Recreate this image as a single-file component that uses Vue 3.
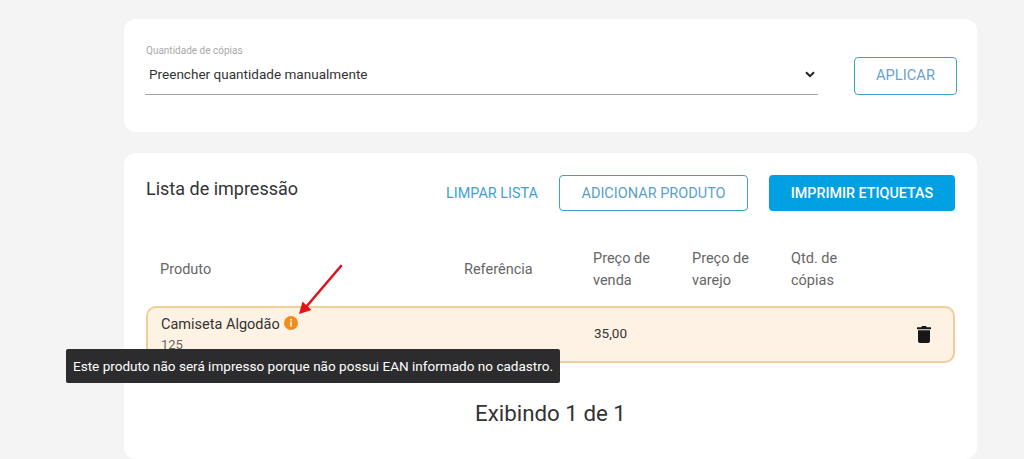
<template>
  <div class="page">
    <section class="card filter-card">
      <div class="field">
        <label class="field-label">Quantidade de cópias</label>
        <div class="select">
          <span>Preencher quantidade manualmente</span>
          <svg class="chevron" width="10" height="7" viewBox="0 0 10 7"><path d="M1 1.2 5 5.2 9 1.2" fill="none" stroke="#222" stroke-width="2"/></svg>
        </div>
      </div>
      <button class="btn outline apply">APLICAR</button>
    </section>

    <section class="card list-card">
      <header class="list-head">
        <h2>Lista de impressão</h2>
        <div class="actions">
          <button class="btn link">LIMPAR LISTA</button>
          <button class="btn outline add">ADICIONAR PRODUTO</button>
          <button class="btn solid">IMPRIMIR ETIQUETAS</button>
        </div>
      </header>

      <div class="cols table-head">
        <span>Produto</span>
        <span>Referência</span>
        <span>Preço de<br />venda</span>
        <span>Preço de<br />varejo</span>
        <span>Qtd. de<br />cópias</span>
      </div>

      <div class="row-wrap">
        <div class="cols row">
          <div class="product">
            <div class="name">
              Camiseta Algodão
              <svg class="info" width="14" height="14" viewBox="0 0 14 14">
                <circle cx="7" cy="7" r="7" fill="#f28c1c"/>
                <rect x="6.200" y="3" width="1.600" height="1.600" fill="#fff"/>
                <rect x="6.200" y="5.600" width="1.600" height="5" fill="#fff"/>
              </svg>
            </div>
            <div class="code">125</div>
          </div>
          <span></span>
          <span class="price">35,00</span>
          <span></span>
          <span></span>
          <svg class="trash" width="14" height="17" viewBox="0 0 14 17">
            <path d="M5 0h4l.8 1.200H14v2H0v-2h4.200zM1 4.200h12V15a2 2 0 0 1-2 2H3a2 2 0 0 1-2-2z" fill="#17171a"/>
          </svg>
        </div>
        <div class="tooltip">Este produto não será impresso porque não possui EAN informado no cadastro.</div>
        <svg class="arrow" width="50" height="56" viewBox="0 0 50 56">
          <path d="M46 4 11 45" stroke="#e0141c" stroke-width="2.600" stroke-linecap="round" fill="none"/>
          <path d="M4 52 7.500 39.500 16.500 48z" fill="#e0141c"/>
        </svg>
      </div>

      <p class="count">Exibindo 1 de 1</p>
    </section>
  </div>
</template>

<script setup>
</script>

<style>
html, body { margin: 0; background: #f4f4f4; overflow: hidden; }
</style>

<style scoped>
.page {
  box-sizing: border-box;
  height: 459px;
  overflow: hidden;
  padding: 19px 47px 0 124px;
  display: flex;
  flex-direction: column;
  gap: 21px;
  font-family: Roboto, "Liberation Sans", sans-serif;
  color: #333;
}
.card { background: #fff; border-radius: 12px; }
.filter-card {
  height: 113px;
  box-sizing: border-box;
  padding: 26px 20px 0 21px;
  display: flex;
  align-items: flex-start;
  gap: 36px;
  flex-shrink: 0;
}
.field { width: 673px; }
.field-label { display: block; font-size: 10px; line-height: 12px; color: #a9a9a9; padding-left: 1px; }
.select {
  box-sizing: border-box;
  height: 39px;
  margin-top: -1px;
  padding: 0 2px 0 4px;
  border-bottom: 1px solid #a3a3a8;
  display: flex;
  align-items: center;
  justify-content: space-between;
  font-size: 13.550px;
  color: #333;
}
.select span { margin-top: -2px; }
.chevron { margin-right: 1px; margin-top: -2px; }
.btn {
  font-family: inherit;
  font-size: 14px;
  font-weight: 400;
  border-radius: 4px;
  box-sizing: border-box;
  background: none;
  border: 0;
  padding: 0;
  color: #4a9fd0;
}
.apply { margin-top: 12px; width: 103px; height: 38px; color: #6aa2d2; font-size: 14.700px; padding-bottom: 2px; }
.outline { border: 1px solid #3f9fc4; background: #fff; }
.list-card { flex: 1; padding: 22px 22px 0 22px; position: relative; }
.list-head { display: flex; justify-content: space-between; align-items: flex-start; }
.list-head h2 { margin: 4px 0 0; font-size: 18px; line-height: 20px; font-weight: 400; color: #333; }
.actions { display: flex; gap: 21px; }
.link { width: 92px; height: 36px; color: #3f9fd6; font-size: 14.400px; }
.add { width: 189px; height: 36px; color: #5b9fca; font-size: 14.500px; }
.solid { width: 186px; height: 36px; background: #00a0e3; color: #fff; font-weight: 500; font-size: 14.300px; }
.cols {
  display: grid;
  grid-template-columns: 304px 129px 99px 99px 1fr 30px;
  align-items: center;
}
.table-head {
  margin-top: 37px;
  padding-left: 14px;
  font-size: 14.500px;
  line-height: 22px;
  color: #666;
}
.row-wrap { position: relative; margin-top: 14px; }
.row {
  box-sizing: border-box;
  height: 57px;
  padding-left: 13px;
  padding-right: 14px;
  grid-template-columns: 304px 129px 99px 99px 1fr 30px;
  background: #fef2e4;
  border: 2px solid #eecf95;
  border-radius: 10px;
  font-size: 14.500px;
  color: #333;
}
.product { align-self: start; padding-top: 6.500px; }
.name { line-height: 20px; display: flex; align-items: center; gap: 4px; }
.info { margin-top: -4px; }
.code { font-size: 13px; line-height: 16px; color: #666; margin-top: 2px; }
.price { font-size: 13.500px; margin: -3px 0 0 0; }
.trash { justify-self: center; }
.tooltip {
  position: absolute;
  left: -80px;
  top: 43px;
  height: 34px;
  padding: 0 7px;
  display: flex;
  align-items: center;
  background: #2c2c2e;
  color: #fff;
  font-size: 13.550px;
  border-radius: 2px;
  white-space: nowrap;
}
.arrow { position: absolute; left: 149px; top: -44px; }
.count { margin: 37px 0 0; text-align: center; font-size: 22.300px; line-height: 26px; color: #333; }
</style>
